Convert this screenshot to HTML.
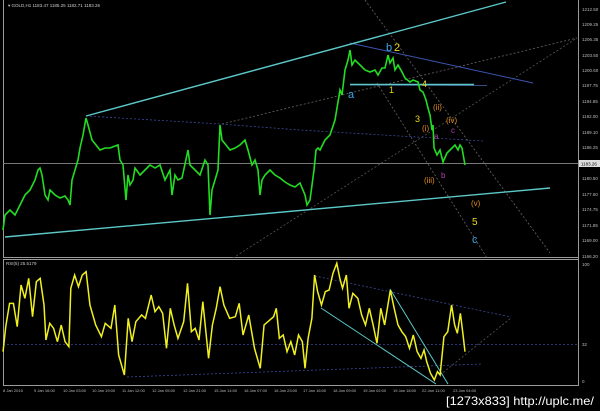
<!DOCTYPE html>
<html><head><style>
html,body{margin:0;padding:0;background:#000;width:600px;height:411px;overflow:hidden}
svg{display:block}
text{font-family:"Liberation Sans",sans-serif}
</style></head><body>
<svg width="600" height="411" viewBox="0 0 600 411" xmlns="http://www.w3.org/2000/svg">
<rect width="600" height="411" fill="#000"/>
<g stroke="#9a9a9a" stroke-width="1" fill="none">
<line x1="3.5" y1="0" x2="3.5" y2="257"/>
<line x1="578.5" y1="0" x2="578.5" y2="386"/>
<line x1="3" y1="257.5" x2="579" y2="257.5"/>
<line x1="3" y1="259.5" x2="579" y2="259.5"/>
<line x1="3.5" y1="259" x2="3.5" y2="386"/>
<line x1="3" y1="385.5" x2="579" y2="385.5"/>
</g>
<line x1="3" y1="163.5" x2="578" y2="163.5" stroke="#777"/>
<text x="8" y="7" fill="#ccc" font-size="4.5">▾ GOLD,H1  1183.47 1185.25 1182.71 1183.26</text>
<g fill="#bbb" font-size="4.5">
<text x="582" y="11">1212.50</text><text x="582" y="26">1209.25</text><text x="582" y="41">1206.35</text>
<text x="582" y="57">1203.50</text><text x="582" y="72">1200.60</text><text x="582" y="87">1197.75</text>
<text x="582" y="103">1194.85</text><text x="582" y="118">1192.00</text><text x="582" y="134">1189.10</text>
<text x="582" y="149">1186.25</text><text x="582" y="180">1180.50</text><text x="582" y="196">1177.60</text>
<text x="582" y="211">1174.75</text><text x="582" y="227">1171.85</text><text x="582" y="242">1169.00</text>
<text x="582" y="258">1166.20</text>
<text x="582" y="266">100</text><text x="582" y="346">32</text><text x="582" y="383">0</text>
</g>
<rect x="579" y="160" width="21" height="7" fill="#ddd"/>
<text x="581" y="165.5" fill="#000" font-size="4.5">1183.26</text>
<g fill="none" stroke-dasharray="2,2" stroke-width="0.8">
<polyline points="86,116 220,124 300,130 483,141" stroke="#3a4a9a"/>
<line x1="222" y1="124" x2="577" y2="38" stroke="#666"/>
<line x1="233" y1="258" x2="577" y2="38" stroke="#555"/>
<line x1="365" y1="0" x2="550" y2="253" stroke="#666"/>
<line x1="377" y1="83" x2="487" y2="258" stroke="#666"/>
</g>
<line x1="350" y1="43" x2="533" y2="83" stroke="#3a55b0" stroke-width="1"/>
<line x1="350" y1="85" x2="487" y2="85.5" stroke="#4a6ab0" stroke-width="0.8"/>
<g stroke="#5cc8c8" stroke-width="1.4" fill="none">
<line x1="86" y1="116" x2="506" y2="2"/>
<line x1="5" y1="237" x2="550" y2="188"/>
<line x1="350" y1="84.5" x2="474" y2="84.5"/>
</g>
<polyline fill="none" stroke="#22dd22" stroke-width="1.6" points="3,230 5,215 10,210 15,215 20,205 25,195 30,190 35,180 38,170 40,168 42,175 45,195 48,200 50,190 55,195 60,198 65,196 68,200 70,205 72,180 75,170 78,160 80,148 83,135 86,118 88,125 92,140 96,145 100,150 105,148 110,148 115,146 118,145 120,160 123,165 126,200 128,175 130,185 133,180 135,168 140,175 145,170 150,165 155,168 160,165 165,180 170,170 172,195 175,175 178,180 182,178 188,150 190,165 195,170 200,175 205,160 208,165 210,215 212,190 215,180 218,170 220,125 222,140 226,145 230,150 235,148 240,145 245,140 248,150 252,165 255,160 258,170 260,195 262,180 265,175 270,170 275,175 280,178 285,182 290,185 295,187 300,183 305,195 307,205 310,200 312,185 314,170 316,150 318,148 320,150 325,140 330,135 335,120 340,90 342,95 345,70 348,60 350,50 352,65 355,60 360,65 365,70 370,72 375,70 378,75 382,68 385,68 388,55 390,63 393,58 395,70 398,65 402,72 405,78 410,82 413,80 418,82 420,90 423,92 426,100 428,108 430,115 432,130 433,125 434,148 437,155 440,150 443,162 447,153 450,150 455,145 458,150 460,145 462,148 465,165"/>
<g font-size="11">
<text x="348" y="98" fill="#3aa8e8">a</text>
<text x="386" y="51" fill="#3aa8e8">b</text>
<text x="394" y="51" fill="#e8d820">2</text>
<text x="389" y="93" fill="#e8d820" font-size="9">1</text>
<text x="422" y="87" fill="#e8d820" font-size="9">4</text>
<text x="415" y="122" fill="#e8d820" font-size="9">3</text>
<text x="433" y="110" fill="#e08a20" font-size="8">(ii)</text>
<text x="422" y="131" fill="#e08a20" font-size="8">(i)</text>
<text x="446" y="123" fill="#e08a20" font-size="8">(iv)</text>
<text x="434" y="139" fill="#b040b0" font-size="8">a</text>
<text x="451" y="133" fill="#b040b0" font-size="8">c</text>
<text x="424" y="183" fill="#e08a20" font-size="8">(iii)</text>
<text x="441" y="178" fill="#b040b0" font-size="8">b</text>
<text x="471" y="206" fill="#e08a20" font-size="8">(v)</text>
<text x="472" y="225" fill="#e8d820" font-size="10">5</text>
<text x="472" y="243" fill="#3aa8e8">c</text>
</g>
<text x="6" y="265" fill="#ccc" font-size="4.5">RSI(5) 25.5179</text>
<line x1="3" y1="344.5" x2="578" y2="344.5" stroke="#3a4a9a" stroke-dasharray="2,2" stroke-width="0.8"/>
<g fill="none" stroke-dasharray="2,2" stroke-width="0.8">
<line x1="315" y1="276" x2="511" y2="317" stroke="#3a4a9a"/>
<line x1="127" y1="377" x2="482" y2="364" stroke="#3a4a9a"/>
<line x1="440" y1="375" x2="511" y2="318" stroke="#555"/>
</g>
<g stroke="#5cc8c8" stroke-width="1" fill="none">
<line x1="321" y1="308" x2="436" y2="384"/>
<line x1="390" y1="289" x2="448" y2="384"/>
</g>
<polyline fill="none" stroke="#f0f020" stroke-width="1.5" transform="translate(0,255) scale(0.3827,0.3333)" points="8,290 15,215 25,145 35,145 45,215 55,90 65,130 75,70 85,185 95,80 105,70 115,150 120,255 130,205 140,220 150,260 160,210 170,260 180,275 185,100 195,60 205,95 215,60 225,50 235,150 250,210 265,245 275,205 290,220 300,150 310,300 325,360 335,190 345,260 355,200 370,180 380,190 395,120 405,170 415,155 425,175 435,280 445,160 455,210 465,250 480,200 490,85 500,230 510,220 520,255 530,140 545,310 555,210 565,160 575,95 585,150 600,190 615,185 625,145 635,240 650,180 665,280 680,340 690,210 700,200 715,185 722,160 730,250 740,240 750,290 760,260 770,300 780,240 790,260 797,340 805,250 815,190 822,60 830,110 840,150 850,110 860,105 870,55 880,25 888,70 895,100 905,60 912,160 922,115 935,130 945,180 955,210 965,160 975,210 985,265 995,160 1005,210 1020,105 1030,160 1040,210 1050,230 1060,245 1070,280 1080,240 1090,290 1100,310 1108,285 1115,320 1125,355 1135,375 1143,350 1150,360 1160,245 1170,230 1180,150 1188,210 1195,235 1203,175 1210,240 1215,290" vector-effect="non-scaling-stroke"/>
<g fill="#bbb" font-size="4">
<text x="3" y="392">8 Jan 2015</text><text x="34" y="392">9 Jan 16:00</text><text x="63" y="392">10 Jan 03:00</text>
<text x="92" y="392">10 Jan 19:00</text><text x="122" y="392">11 Jan 12:00</text><text x="152" y="392">12 Jan 05:00</text>
<text x="183" y="392">12 Jan 21:00</text><text x="214" y="392">15 Jan 14:00</text><text x="244" y="392">16 Jan 07:00</text>
<text x="274" y="392">16 Jan 23:00</text><text x="303" y="392">17 Jan 16:00</text><text x="333" y="392">18 Jan 09:00</text>
<text x="363" y="392">19 Jan 02:00</text><text x="393" y="392">19 Jan 18:00</text><text x="422" y="392">22 Jan 11:00</text>
<text x="453" y="392">23 Jan 04:00</text>
</g>
<text x="446" y="405" fill="#fff" font-size="12" textLength="148" lengthAdjust="spacingAndGlyphs">[1273x833] http://uplc.me/</text>
</svg>
</body></html>
